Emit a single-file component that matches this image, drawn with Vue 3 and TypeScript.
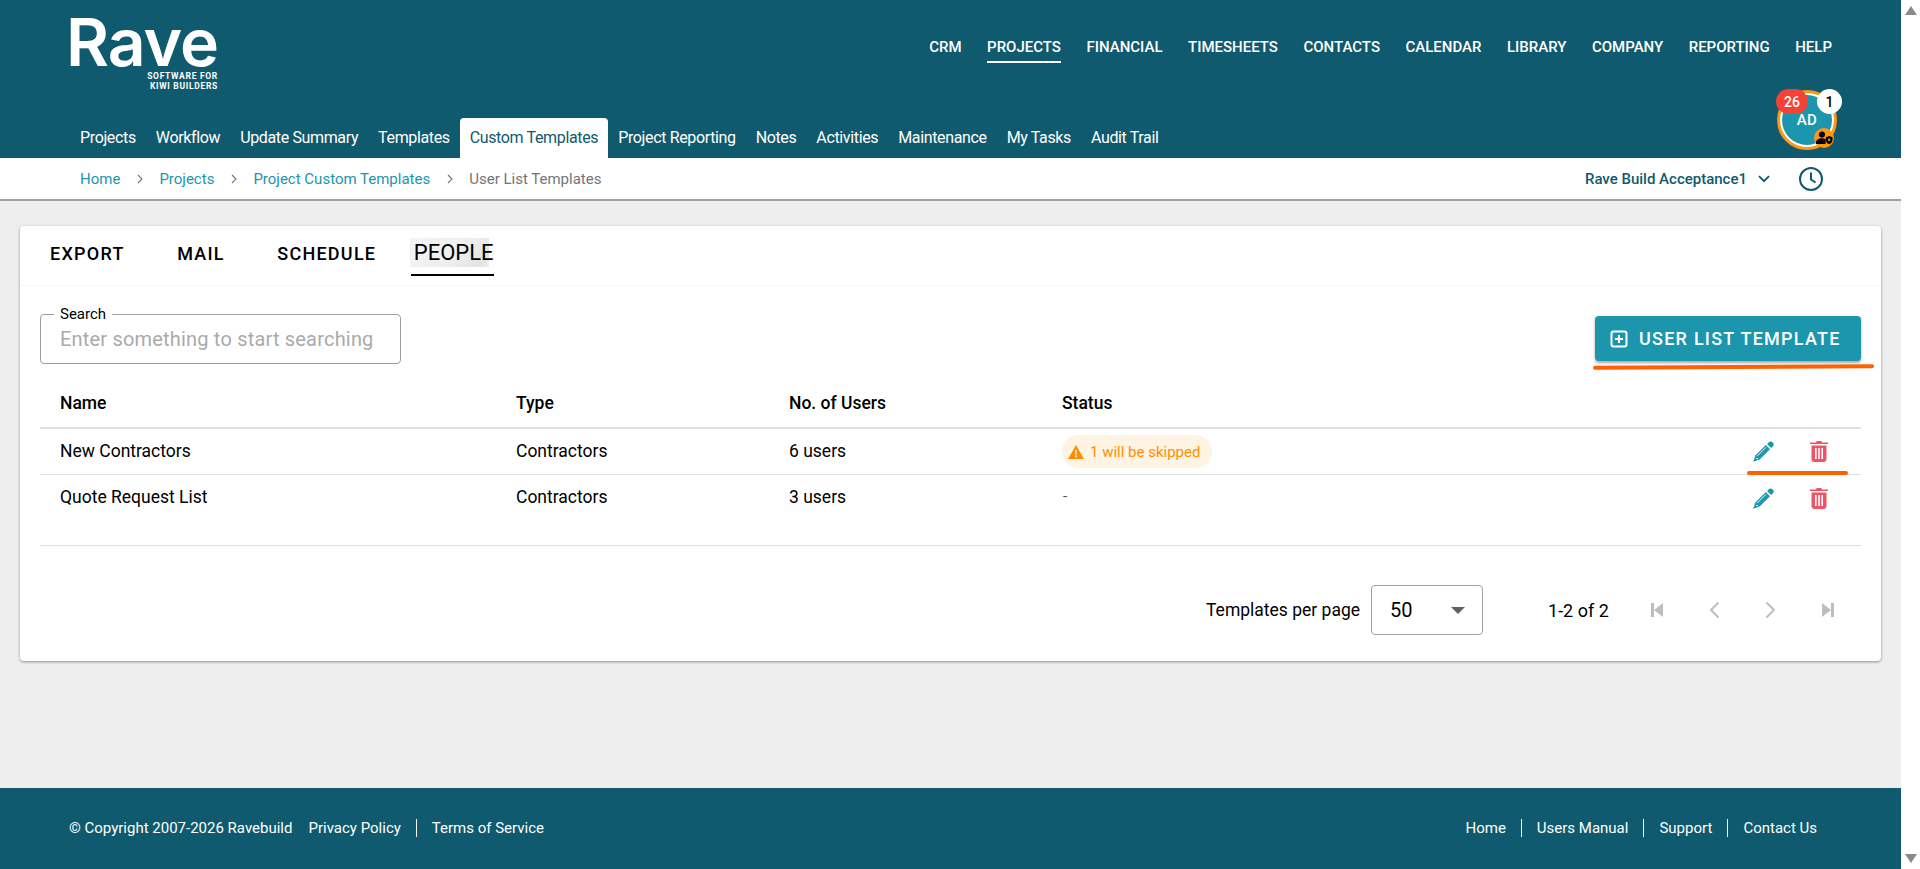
<script setup lang="ts">
const topNav = ['CRM', 'Projects', 'Financial', 'Timesheets', 'Contacts', 'Calendar', 'Library', 'Company', 'Reporting', 'Help']
const tabs = ['Projects', 'Workflow', 'Update Summary', 'Templates', 'Custom Templates', 'Project Reporting', 'Notes', 'Activities', 'Maintenance', 'My Tasks', 'Audit Trail']
const cardTabs = ['Export', 'Mail', 'Schedule', 'People']
const rows = [
  { name: 'New Contractors', type: 'Contractors', users: '6 users', skipped: '1 will be skipped' },
  { name: 'Quote Request List', type: 'Contractors', users: '3 users', skipped: '' },
]
</script>

<template>
  <div class="page">
    <div class="main">
      <header class="header">
        <div class="head-top">
          <div class="logo">
            <div class="logo-word">Rave</div>
            <div class="logo-sub">SOFTWARE FOR<br />KIWI BUILDERS</div>
          </div>
          <nav class="top-nav">
            <a v-for="n in topNav" :key="n" :class="{ on: n === 'Projects' }">{{ n }}</a>
          </nav>
        </div>
        <nav class="tabs">
          <a v-for="t in tabs" :key="t" :class="{ on: t === 'Custom Templates' }">{{ t }}</a>
        </nav>
        <div class="avatar">
          <div class="avatar-inner">AD</div>
          <span class="badge red">26</span>
          <span class="badge white">1</span>
          <span class="role">
            <svg viewBox="0 0 20 16" width="17" height="14">
              <circle cx="7" cy="4" r="3.6" fill="#000" />
              <path d="M0 15v-2c0-3 4-4.6 7-4.6 1.5 0 3 .3 4.3 1V15z" fill="#000" />
              <path d="M15.5 5.5l4 1.5v3c0 2.6-1.7 4.6-4 5.3-2.3-.7-4-2.7-4-5.3V7z" fill="#000" />
              <circle cx="15.5" cy="10" r="1.4" fill="#ff9811" />
            </svg>
          </span>
        </div>
      </header>

      <div class="crumbs">
        <div class="crumb-list">
          <a>Home</a>
          <svg class="sep" viewBox="0 0 6 10" width="6" height="10"><path d="M1 1l4 4-4 4" fill="none" stroke="#757575" stroke-width="1.1" /></svg>
          <a>Projects</a>
          <svg class="sep" viewBox="0 0 6 10" width="6" height="10"><path d="M1 1l4 4-4 4" fill="none" stroke="#757575" stroke-width="1.1" /></svg>
          <a>Project Custom Templates</a>
          <svg class="sep" viewBox="0 0 6 10" width="6" height="10"><path d="M1 1l4 4-4 4" fill="none" stroke="#757575" stroke-width="1.1" /></svg>
          <span>User List Templates</span>
        </div>
        <div class="crumb-right">
          <b>Rave Build Acceptance1</b>
          <svg class="chev" viewBox="0 0 12 8" width="12" height="8"><path d="M1 1.2l5 5 5-5" fill="none" stroke="#0f5a6e" stroke-width="1.8" /></svg>
          <svg class="clock" viewBox="0 0 24 24" width="24" height="24">
            <circle cx="12" cy="12" r="11" fill="none" stroke="#0f5a6e" stroke-width="2" />
            <path d="M12 5.5V12.5l4.6 3" fill="none" stroke="#0f5a6e" stroke-width="2" />
          </svg>
        </div>
      </div>

      <main class="content">
        <section class="card">
          <div class="card-tabs">
            <a v-for="t in cardTabs" :key="t" :class="{ on: t === 'People' }"><span>{{ t }}</span></a>
          </div>
          <div class="card-body">
            <div class="toolbar">
              <label class="search">
                <span class="search-label">Search</span>
                <input placeholder="Enter something to start searching" />
              </label>
              <button class="add">
                <svg viewBox="0 0 18 18" width="18" height="18">
                  <rect x="1.5" y="1.5" width="15" height="15" rx="2" fill="none" stroke="#fff" stroke-width="2" />
                  <path d="M9 5v8M5 9h8" stroke="#fff" stroke-width="2" />
                </svg>
                User List Template
              </button>
              <span class="scribble scribble-a"></span>
            </div>

            <div class="row head">
              <div>Name</div><div>Type</div><div>No. of Users</div><div>Status</div><div></div>
            </div>
            <div v-for="(r, i) in rows" :key="r.name" class="row" :class="{ last: i === rows.length - 1 }">
              <div>{{ r.name }}</div>
              <div>{{ r.type }}</div>
              <div>{{ r.users }}</div>
              <div class="status">
                <span v-if="r.skipped" class="chip">
                  <svg viewBox="0 0 16 14" width="16" height="14"><path d="M8 0l8 14H0z" fill="#ff8f00" /><path d="M8 5v4.5M8 10.6v1.6" stroke="#fff3e4" stroke-width="1.5" /></svg>
                  {{ r.skipped }}
                </span>
                <span v-else class="dash">-</span>
              </div>
              <div class="actions">
                <svg viewBox="0 0 21 21" width="21" height="21">
                  <path d="M15.6 1.4a2.9 2.9 0 014.1 0 2.9 2.9 0 010 4.1l-1.5 1.5-4.1-4.1z" fill="#1b96ac" />
                  <path d="M12.9 4.1l4.1 4.1L6.6 18.6.2 20.8l2.2-6.4z" fill="#1b96ac" />
                  <path d="M4.1 15.2l9-9M3.2 17.6l1.8 0" stroke="#fff" stroke-width=".9" fill="none" />
                </svg>
                <svg viewBox="0 0 18 21" width="18" height="21">
                  <path d="M6 1.5C6 .7 6.7 0 7.5 0h3c.8 0 1.5.7 1.5 1.5H18V3H0V1.5z" fill="#ef5466" />
                  <path fill-rule="evenodd" d="M1.5 4.5h15V18c0 1.7-1.3 3-3 3h-9c-1.7 0-3-1.3-3-3zM5 7v11h1.6V7zm3.2 0v11h1.6V7zM11.4 7v11H13V7z" fill="#ef5466" />
                </svg>
              </div>
            </div>
            <div class="table-foot">
              <span class="scribble scribble-b"></span>
            </div>

            <div class="pager">
              <span class="per">Templates per page</span>
              <div class="select"><span>50</span><i></i></div>
              <span class="range">1-2 of 2</span>
              <div class="pager-btns">
                <svg viewBox="0 0 14 16" width="14" height="16"><path d="M1 1h3v14H1zM13 1v14L4 8z" fill="#bdbdbd" /></svg>
                <svg viewBox="0 0 14 18" width="14" height="18"><path d="M11.5 1.5L4 9l7.5 7.5" fill="none" stroke="#bdbdbd" stroke-width="2" /></svg>
                <svg viewBox="0 0 14 18" width="14" height="18"><path d="M2.5 1.5L10 9l-7.5 7.5" fill="none" stroke="#bdbdbd" stroke-width="2" /></svg>
                <svg viewBox="0 0 14 16" width="14" height="16"><path d="M13 1h-3v14h3zM1 1v14l9-7z" fill="#bdbdbd" /></svg>
              </div>
            </div>
          </div>
        </section>
      </main>

      <footer class="footer">
        <div class="foot-left">
          <span class="copy">© Copyright 2007-2026 Ravebuild</span>
          <a>Privacy Policy</a><em></em><a>Terms of Service</a>
        </div>
        <div class="foot-right">
          <a>Home</a><em></em><a>Users Manual</a><em></em><a>Support</a><em></em><a>Contact Us</a>
        </div>
      </footer>
    </div>
    <aside class="scrollbar">
      <i class="arrow up"></i>
      <i class="arrow down"></i>
    </aside>
  </div>
</template>

<style>
html, body { margin: 0; height: 100%; overflow: hidden; }
</style>

<style scoped>
.page { display: flex; width: 1920px; height: 869px; font-family: Roboto, "Liberation Sans", sans-serif; color: #000; overflow: hidden; }
.main { width: 1901px; display: flex; flex-direction: column; background: #eeeeee; }
.scrollbar { width: 19px; background: #fff; display: flex; flex-direction: column; justify-content: space-between; align-items: center; padding: 6px 0; box-sizing: border-box; }
.arrow { width: 0; height: 0; border-left: 6px solid transparent; border-right: 6px solid transparent; }
.arrow.up { border-bottom: 9px solid #8a8a8a; }
.arrow.down { border-top: 9px solid #8a8a8a; }

.header { position: relative; height: 158px; background: #0f5a6e; color: #fff; flex: none; }
.head-top { height: 118px; display: flex; justify-content: space-between; padding: 0 69px 0 66px; }
.logo { padding-top: 13.5px; width: 154px; flex: none; }
.logo-word { font-family: Inter, sans-serif; font-weight: 600; font-size: 66px; line-height: 57px; letter-spacing: -1px; white-space: nowrap; }
.logo-sub { font-family: Roboto, sans-serif; font-weight: 700; font-size: 8.5px; line-height: 10.5px; letter-spacing: .7px; text-align: right; width: 152px; }
.top-nav { display: flex; gap: 25.5px; padding-top: 37px; height: 20px; }
.top-nav a { font-size: 15px; font-weight: 500; line-height: 20px; text-transform: uppercase; height: 26px; box-sizing: border-box; }
.top-nav a.on { border-bottom: 2px solid #fff; }
.tabs { height: 40px; display: flex; padding-left: 70px; }
.tabs a { padding: 0 10px; font-size: 16px; line-height: 40px; letter-spacing: -.36px; }
.tabs a.on { background: #fff; color: #0f5a6e; border-radius: 4px 4px 0 0; }

.avatar { position: absolute; left: 1777px; top: 90px; width: 60px; height: 60px; box-sizing: border-box; border: 3px solid #ff9811; border-radius: 50%; background: #fff; padding: 2px; }
.avatar-inner { width: 100%; height: 100%; border-radius: 50%; background: #1b96ac; display: flex; align-items: center; justify-content: center; font-size: 15px; font-weight: 500; letter-spacing: .5px; }
.badge { position: absolute; top: -4px; height: 25px; border-radius: 13px; display: flex; align-items: center; justify-content: center; font-size: 14px; font-weight: 500; }
.badge.red { left: -4px; width: 32px; background: #f44336; color: #fff; }
.badge.white { left: 37px; width: 25px; background: #fff; color: #000; }
.role { position: absolute; left: 34px; top: 35px; width: 20px; height: 20px; background: #ff9811; border-radius: 50%; display: flex; align-items: center; justify-content: center; }

.crumbs { height: 43px; background: #fff; border-bottom: 2px solid #9e9e9e; box-sizing: border-box; flex: none; display: flex; align-items: center; justify-content: space-between; padding: 0 78px 0 80px; font-size: 15px; }
.crumb-list { display: flex; align-items: center; color: #757575; }
.crumb-list a { color: #1b96ac; }
.crumb-list .sep { margin: 0 16.5px; }
.crumb-right { display: flex; align-items: center; color: #0f5a6e; }
.crumb-right b { font-weight: 500; }
.chev { margin-left: 11px; }
.clock { margin-left: 29px; }

.content { flex: 1; padding: 25px 20px 0; }
.card { background: #fff; border-radius: 4px; height: 435px; box-shadow: 0 1px 3px rgba(0, 0, 0, .4); display: flex; flex-direction: column; }
.card-tabs { height: 59px; flex: none; display: flex; padding-left: 30px; box-shadow: 0 1px 1px rgba(0, 0, 0, .04); }
.card-tabs a { font-size: 18px; font-weight: 500; letter-spacing: 1.25px; text-transform: uppercase; margin-right: 52.5px; padding-top: 12px; line-height: 32px; height: 50px; box-sizing: border-box; }
.card-tabs a.on { width: 83px; font-size: 22px; font-weight: 400; letter-spacing: 0; border-bottom: 2px solid #000; margin-left: -18px; padding: 12px 0 0; }
.card-tabs a.on span { display: block; box-sizing: border-box; height: 29px; line-height: 29px; width: 79px; margin-left: -1px; padding-left: 4px; white-space: nowrap; background: linear-gradient(135deg, #f4f4f4 0%, #eeeeee 60%, #e2e2e2 90%, #f2f2f2 100%); }
.card-body { flex: 1; padding: 29px 20px 0; display: flex; flex-direction: column; }
.toolbar { position: relative; height: 65px; display: flex; justify-content: space-between; align-items: flex-start; flex: none; }
.search { position: relative; width: 361px; height: 50px; border: 1px solid #9e9e9e; border-radius: 4px; box-sizing: border-box; display: block; }
.search-label { position: absolute; left: 13px; top: -9px; background: #fff; padding: 0 6px; font-size: 15px; line-height: 16px; }
.search input { width: 100%; height: 100%; border: 0; outline: 0; background: transparent; padding: 0 19px; font: 20px Roboto, sans-serif; letter-spacing: .19px; box-sizing: border-box; }
.search input::placeholder { color: #aaa; opacity: 1; }
.add { height: 45px; width: 266px; margin-top: 2px; padding: 0 0 0 15px; background: #1b96ac; color: #fff; border: 0; border-radius: 4px; box-shadow: 0 2px 3px rgba(0, 0, 0, .35); font: 500 18px Roboto, sans-serif; letter-spacing: 1.25px; text-transform: uppercase; display: flex; align-items: center; justify-content: flex-start; gap: 11px; }
.scribble { position: absolute; background: #ff6100; border-radius: 2px; }
.scribble-a { left: 1553px; top: 51px; width: 281px; height: 4px; transform: rotate(-.3deg); }
.row { display: grid; grid-template-columns: 476px 273px 273px 1fr 220px; align-items: center; height: 46px; border-bottom: 1px solid #e0e0e0; font-size: 17.5px; box-sizing: border-box; flex: none; }
.row > div:not(.status):not(.actions) { padding-bottom: 2px; }
.row.head > div:not(.status):not(.actions) { padding-bottom: 0; }
.row > div:first-child { padding-left: 20px; }
.row.head { height: 50px; font-weight: 500; border-bottom: 2px solid #e0e0e0; }
.row.last { border-bottom: 0; }
.chip { display: inline-flex; align-items: center; gap: 6px; height: 33px; padding: 0 12px 0 6px; background: #fff3e4; color: #ff8f00; border-radius: 17px; font-size: 15px; }
.dash { display: block; color: #555; font-size: 15px; padding: 0 0 5px 1px; }
.actions { display: flex; justify-content: flex-end; gap: 36px; padding-right: 33px; align-items: center; }
.table-foot { position: relative; height: 25px; border-bottom: 1px solid #e0e0e0; flex: none; box-sizing: border-box; }
.scribble-b { left: 1707px; top: -50px; width: 101px; height: 4px; }
.pager { display: flex; align-items: center; height: 50px; margin-top: 39px; padding-left: 1166px; font-size: 18px; }
.per { margin-right: 11px; white-space: nowrap; font-size: 17.5px; }
.select { width: 112px; height: 50px; border: 1px solid #9e9e9e; border-radius: 4px; box-sizing: border-box; display: flex; align-items: center; justify-content: space-between; padding: 0 17px 0 18px; font-size: 20px; flex: none; }
.select i { width: 0; height: 0; border-left: 7px solid transparent; border-right: 7px solid transparent; border-top: 7px solid #616161; }
.range { margin-left: 65px; white-space: nowrap; }
.pager-btns { margin-left: 41px; display: flex; gap: 43px; align-items: center; }

.footer { height: 81px; flex: none; background: #0f5a6e; color: #fff; display: flex; justify-content: space-between; align-items: center; padding: 0 84px 2px 69px; box-sizing: border-box; font-size: 15px; }
.foot-left, .foot-right { display: flex; align-items: center; }
.copy { margin-right: 16px; }
.footer em { width: 1px; height: 18px; background: #fff; margin: 0 15px; }
</style>
